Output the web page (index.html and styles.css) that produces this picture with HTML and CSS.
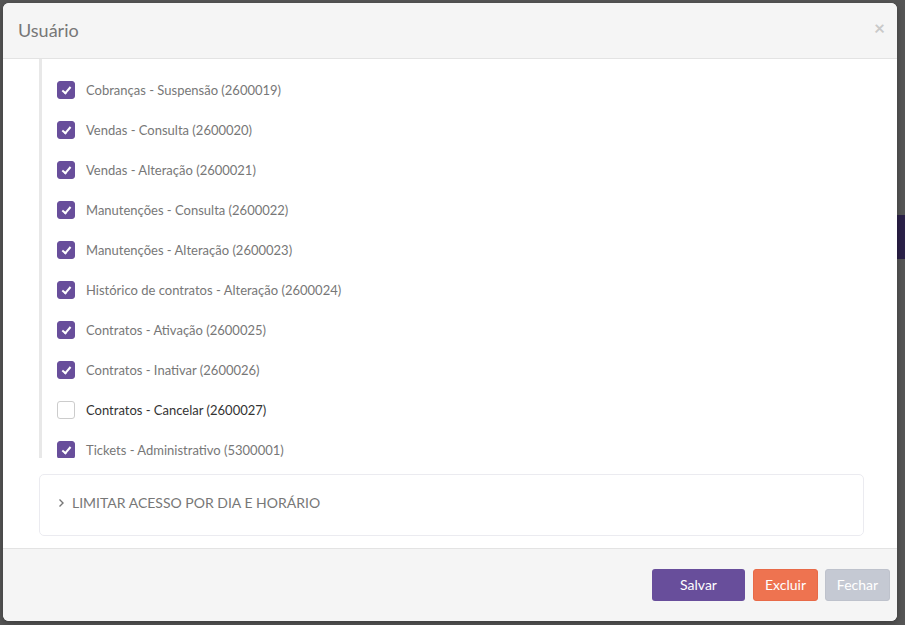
FILE: index.html
```html
<!DOCTYPE html>
<html>
<head>
    <meta charset="utf-8">
    <title>Usuário</title>
    <link rel="stylesheet" href="styles.css">
</head>
<body>
    <div class="backdrop-bar"></div>

    <div class="modal">
        <div class="modal-header">
            <h4>Usuário</h4>
            <span class="close">&times;</span>
        </div>

        <div class="modal-body">
            <div class="perm-scroll">
                <ul class="perm-list">
                    <li><span class="check on"></span>Cobranças - Suspensão (2600019)</li>
                    <li><span class="check on"></span>Vendas - Consulta (2600020)</li>
                    <li><span class="check on"></span>Vendas - Alteração (2600021)</li>
                    <li><span class="check on"></span>Manutenções - Consulta (2600022)</li>
                    <li><span class="check on"></span>Manutenções - Alteração (2600023)</li>
                    <li><span class="check on"></span>Histórico de contratos - Alteração (2600024)</li>
                    <li><span class="check on"></span>Contratos - Ativação (2600025)</li>
                    <li><span class="check on"></span>Contratos - Inativar (2600026)</li>
                    <li class="off"><span class="check"></span>Contratos - Cancelar (2600027)</li>
                    <li><span class="check on"></span>Tickets - Administrativo (5300001)</li>
                </ul>
            </div>

            <div class="panel">
                <svg class="chevron" width="8" height="10" viewBox="0 0 8 10">
                    <path d="M2.5 1.5 L6 5 L2.5 8.5" fill="none" stroke="#777" stroke-width="1.4"/>
                </svg>
                LIMITAR ACESSO POR DIA E HORÁRIO
            </div>
        </div>

        <div class="modal-footer">
            <button class="btn btn-save">Salvar</button>
            <button class="btn btn-delete">Excluir</button>
            <button class="btn btn-close">Fechar</button>
        </div>
    </div>
</body>
</html>
```

FILE: styles.css
```css
html, body {
    margin: 0;
    height: 100%;
}

body {
    background-color: #555;
    font-family: Lato, "Open Sans", sans-serif;
    overflow: hidden;
    position: relative;
}

.backdrop-bar {
    position: absolute;
    right: 0;
    top: 215px;
    width: 10px;
    height: 44px;
    background-color: #2b2148;
}

.modal {
    position: relative;
    margin: 3px;
    width: 894px;
    height: 618px;
    background-color: #fff;
    border-radius: 6px;
    display: flex;
    flex-direction: column;
    overflow: hidden;
    box-shadow: 0 2px 6px rgba(0, 0, 0, 0.3);
}

.modal-header {
    height: 55px;
    background-color: #f5f5f5;
    border-bottom: 1px solid #e3e3e3;
    display: flex;
    align-items: center;
    justify-content: space-between;
    padding: 0 12px 0 15px;
    flex-shrink: 0;
}

.modal-header h4 {
    margin: 0;
    font-size: 18px;
    font-weight: normal;
    color: #777;
    padding-bottom: 1px;
}

.close {
    color: #c9c9c9;
    font-size: 19px;
    font-weight: bold;
    margin-top: -6px;
}

.modal-body {
    padding: 0 33px 12px 36px;
    flex-shrink: 0;
}

.perm-scroll {
    height: 399px;
    overflow: hidden;
    border-left: 3px solid #e8e8e8;
    margin-bottom: 16px;
}

.perm-list {
    list-style: none;
    margin: 0;
    padding: 11px 0 0 15px;
}

.perm-list li {
    height: 40px;
    display: flex;
    align-items: center;
    font-size: 13px;
    color: #777;
}

.perm-list li.off {
    color: #333;
}

.check {
    width: 16px;
    height: 16px;
    border: 1px solid #ccc;
    border-radius: 3px;
    background-color: #fff;
    margin-right: 11px;
    position: relative;
}

.check.on {
    background-color: #684e9b;
    border-color: #684e9b;
}

.check.on::after {
    content: "";
    position: absolute;
    left: 6px;
    top: 3px;
    width: 3px;
    height: 7px;
    border: solid #fff;
    border-width: 0 2px 2px 0;
    transform: rotate(40deg);
}

.panel {
    height: 55px;
    border: 1px solid #ebebf0;
    border-radius: 5px;
    display: flex;
    align-items: center;
    padding: 0 0 5px 17px;
    font-size: 14px;
    color: #777;
}

.chevron {
    margin-right: 7px;
}

.modal-footer {
    flex: 1;
    background-color: #f5f5f5;
    border-top: 1px solid #e3e3e3;
    display: flex;
    justify-content: flex-end;
    align-items: flex-start;
    padding: 20px 7px 0 0;
    gap: 8px;
}

.btn {
    height: 32px;
    border: 1px solid transparent;
    border-radius: 3px;
    font-family: Lato, "Open Sans", sans-serif;
    font-size: 14px;
    color: #fff;
    padding: 0 0 2px;
}

.btn-save {
    width: 93px;
    background-color: #684e9b;
}

.btn-delete {
    width: 65px;
    background-color: #ee7350;
    border-color: #e86a48;
}

.btn-close {
    width: 65px;
    background-color: #c5c9d3;
    border-color: #bec2cc;
    margin-left: -1px;
}
```
